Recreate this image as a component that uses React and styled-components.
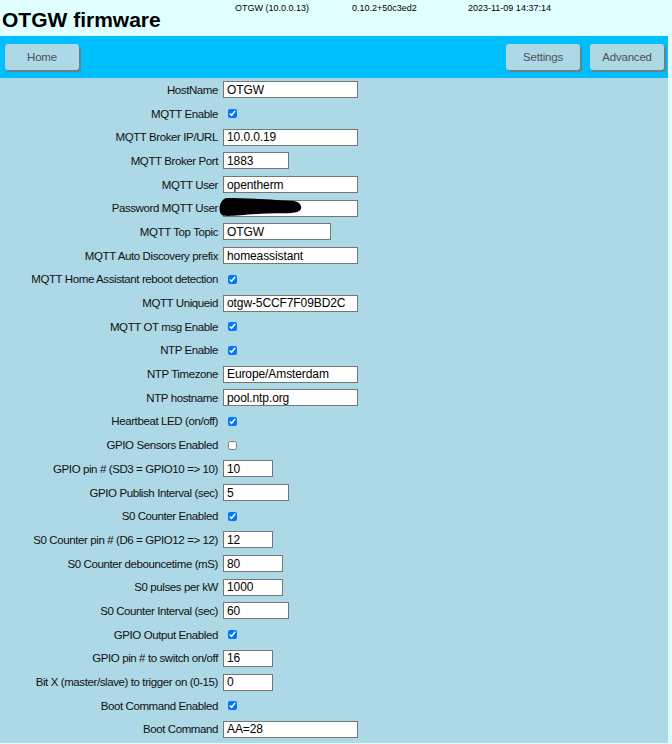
import React from "react";
import styled, { createGlobalStyle } from "styled-components";

const GlobalStyle = createGlobalStyle`
  html, body {
    margin: 0;
    padding: 0;
    background: #e0ffff;
    font-family: "Liberation Sans", Arial, sans-serif;
  }
`;

const fields = [
  { label: "HostName", value: "OTGW", size: 135 },
  { label: "MQTT Enable", check: true },
  { label: "MQTT Broker IP/URL", value: "10.0.0.19", size: 135 },
  { label: "MQTT Broker Port", value: "1883", size: 66 },
  { label: "MQTT User", value: "opentherm", size: 135 },
  { label: "Password MQTT User", value: "", size: 135, redacted: true },
  { label: "MQTT Top Topic", value: "OTGW", size: 108 },
  { label: "MQTT Auto Discovery prefix", value: "homeassistant", size: 135 },
  { label: "MQTT Home Assistant reboot detection", check: true },
  { label: "MQTT Uniqueid", value: "otgw-5CCF7F09BD2C", size: 135 },
  { label: "MQTT OT msg Enable", check: true },
  { label: "NTP Enable", check: true },
  { label: "NTP Timezone", value: "Europe/Amsterdam", size: 135 },
  { label: "NTP hostname", value: "pool.ntp.org", size: 135 },
  { label: "Heartbeat LED (on/off)", check: true },
  { label: "GPIO Sensors Enabled", check: false },
  { label: "GPIO pin # (SD3 = GPIO10 => 10)", value: "10", size: 50 },
  { label: "GPIO Publish Interval (sec)", value: "5", size: 66 },
  { label: "S0 Counter Enabled", check: true },
  { label: "S0 Counter pin # (D6 = GPIO12 => 12)", value: "12", size: 50 },
  { label: "S0 Counter debouncetime (mS)", value: "80", size: 60 },
  { label: "S0 pulses per kW", value: "1000", size: 60 },
  { label: "S0 Counter Interval (sec)", value: "60", size: 66 },
  { label: "GPIO Output Enabled", check: true },
  { label: "GPIO pin # to switch on/off", value: "16", size: 50 },
  { label: "Bit X (master/slave) to trigger on (0-15)", value: "0", size: 50 },
  { label: "Boot Command Enabled", check: true },
  { label: "Boot Command", value: "AA=28", size: 135 },
];

export default function App() {
  return (
    <Page>
      <GlobalStyle />
      <Header>
        <Title>OTGW firmware</Title>
        <Info>OTGW (10.0.0.13)</Info>
        <Info>0.10.2+50c3ed2</Info>
        <Info>2023-11-09 14:37:14</Info>
      </Header>
      <Nav>
        <NavButton>Home</NavButton>
        <Spacer />
        <NavButton>Settings</NavButton>
        <NavButton>Advanced</NavButton>
      </Nav>
      <Settings>
        {fields.map((f) => (
          <Row key={f.label}>
            <Label>{f.label}</Label>
            <Field>
              {"check" in f ? (
                <Check type="checkbox" defaultChecked={f.check} />
              ) : (
                <TextInput type="text" defaultValue={f.value} $w={f.size} />
              )}
              {f.redacted && (
                <Redact viewBox="0 0 84 19" width="84" height="19">
                  <path
                    d="M8 0 C30 0 60 2 76 3 C82 4 84 8 83 11 C81 16 70 15 50 15.5 C30 16 12 19 5 17.5 C0 16 0 3 8 0 Z"
                    fill="#000"
                  />
                </Redact>
              )}
            </Field>
          </Row>
        ))}
      </Settings>
    </Page>
  );
}

const Page = styled.div`
  width: 668px;
`;

const Header = styled.div`
  display: grid;
  grid-template-columns: 235px 117px 116px auto;
  height: 36px;
`;

const Title = styled.div`
  font-size: 21px;
  font-weight: bold;
  color: #000;
  padding: 8px 0 0 2px;
  line-height: 24px;
`;

const Info = styled.div`
  font-size: 9px;
  color: #000;
  padding-top: 3px;
  line-height: 11px;
`;

const Nav = styled.div`
  display: flex;
  align-items: flex-start;
  gap: 10px;
  background: #00bfff;
  height: 42px;
  box-sizing: border-box;
  padding: 8px 4px 0 5px;
`;

const Spacer = styled.div`
  flex: 1;
`;

const NavButton = styled.div`
  width: 74px;
  height: 26px;
  box-sizing: border-box;
  background: #add8e6;
  border-radius: 3px;
  box-shadow: 2px 2px 1px #6c7f86;
  color: #505058;
  font-size: 11.5px;
  letter-spacing: -0.2px;
  display: flex;
  align-items: center;
  justify-content: center;
`;

const Settings = styled.div`
  background: #add8e6;
  display: grid;
  grid-auto-rows: 23.7px;
  padding-bottom: 2px;
`;

const Row = styled.div`
  display: grid;
  grid-template-columns: 218px auto;
  column-gap: 5px;
  align-items: center;
`;

const Label = styled.div`
  text-align: right;
  font-size: 11.5px;
  letter-spacing: -0.4px;
  color: #111;
  white-space: nowrap;
`;

const Field = styled.div`
  position: relative;
  display: flex;
  align-items: center;
`;

const TextInput = styled.input`
  width: ${(p) => p.$w}px;
  height: 17px;
  box-sizing: border-box;
  border: 1px solid #767676;
  padding: 1px 3px;
  font-family: "Liberation Sans", Arial, sans-serif;
  font-size: 12px;
  letter-spacing: -0.1px;
  color: #000;
  background: #fff;
  outline: none;
`;

const Check = styled.input`
  width: 9px;
  height: 9px;
  margin: 0 0 0 5px;
  accent-color: #0075ff;
`;

const Redact = styled.svg`
  position: absolute;
  left: -5px;
  top: -2px;
`;
